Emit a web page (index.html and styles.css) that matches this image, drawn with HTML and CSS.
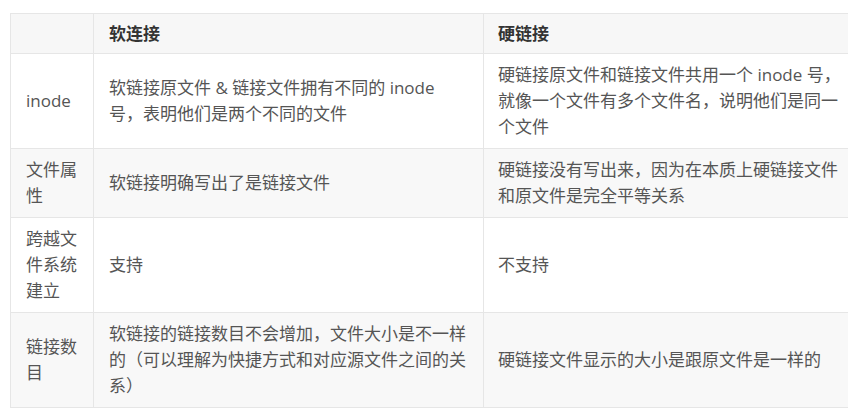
FILE: index.html
```html
<!DOCTYPE html>
<html lang="zh-CN">
<head>
<meta charset="utf-8">
<link rel="stylesheet" href="styles.css">
</head>
<body>
<div class="page">
<table class="cmp">
  <colgroup>
    <col class="c1"><col class="c2"><col class="c3">
  </colgroup>
  <thead>
    <tr><th></th><th>软连接</th><th>硬链接</th></tr>
  </thead>
  <tbody>
    <tr>
      <td>inode</td>
      <td>软链接原文件 &amp; 链接文件拥有不同的 inode 号，表明他们是两个不同的文件</td>
      <td>硬链接原文件和链接文件共用一个 inode 号，就像一个文件有多个文件名，说明他们是同一个文件</td>
    </tr>
    <tr class="alt">
      <td>文件属性</td>
      <td>软链接明确写出了是链接文件</td>
      <td>硬链接没有写出来，因为在本质上硬链接文件和原文件是完全平等关系</td>
    </tr>
    <tr>
      <td>跨越文件系统建立</td>
      <td>支持</td>
      <td>不支持</td>
    </tr>
    <tr class="alt">
      <td>链接数目</td>
      <td>软链接的链接数目不会增加，文件大小是不一样的（可以理解为快捷方式和对应源文件之间的关系）</td>
      <td>硬链接文件显示的大小是跟原文件是一样的</td>
    </tr>
  </tbody>
</table>
</div>
</body>
</html>
```

FILE: styles.css
```css
html, body {
  margin: 0;
  padding: 0;
  background: #ffffff;
}
.page {
  padding: 13px 0 0 10px;
}
.cmp {
  border-collapse: collapse;
  table-layout: fixed;
  width: 838px;
  font-family: "Open Sans", "Noto Sans CJK SC", sans-serif;
  font-size: 17px;
  line-height: 26px;
  color: #555555;
}
.c1 { width: 83px; }
.c2 { width: 390px; }
.c3 { width: 365px; }
.cmp th, .cmp td {
  border: 1px solid #e6e6e6;
  padding: 8px 15px 8px 15px;
  text-align: left;
  vertical-align: middle;
}
.cmp th {
  background: #f7f7f7;
  color: #333333;
  font-weight: 700;
  padding-top: 7px;
  padding-bottom: 6px;
}
.cmp td:first-child {
  padding-left: 15px;
  padding-right: 14px;
}
.cmp td:nth-child(3), .cmp th:nth-child(3) {
  padding-left: 14px;
  padding-right: 0;
  border-right: none;
}
.cmp tr.alt td {
  background: #f8f8f8;
}
```
